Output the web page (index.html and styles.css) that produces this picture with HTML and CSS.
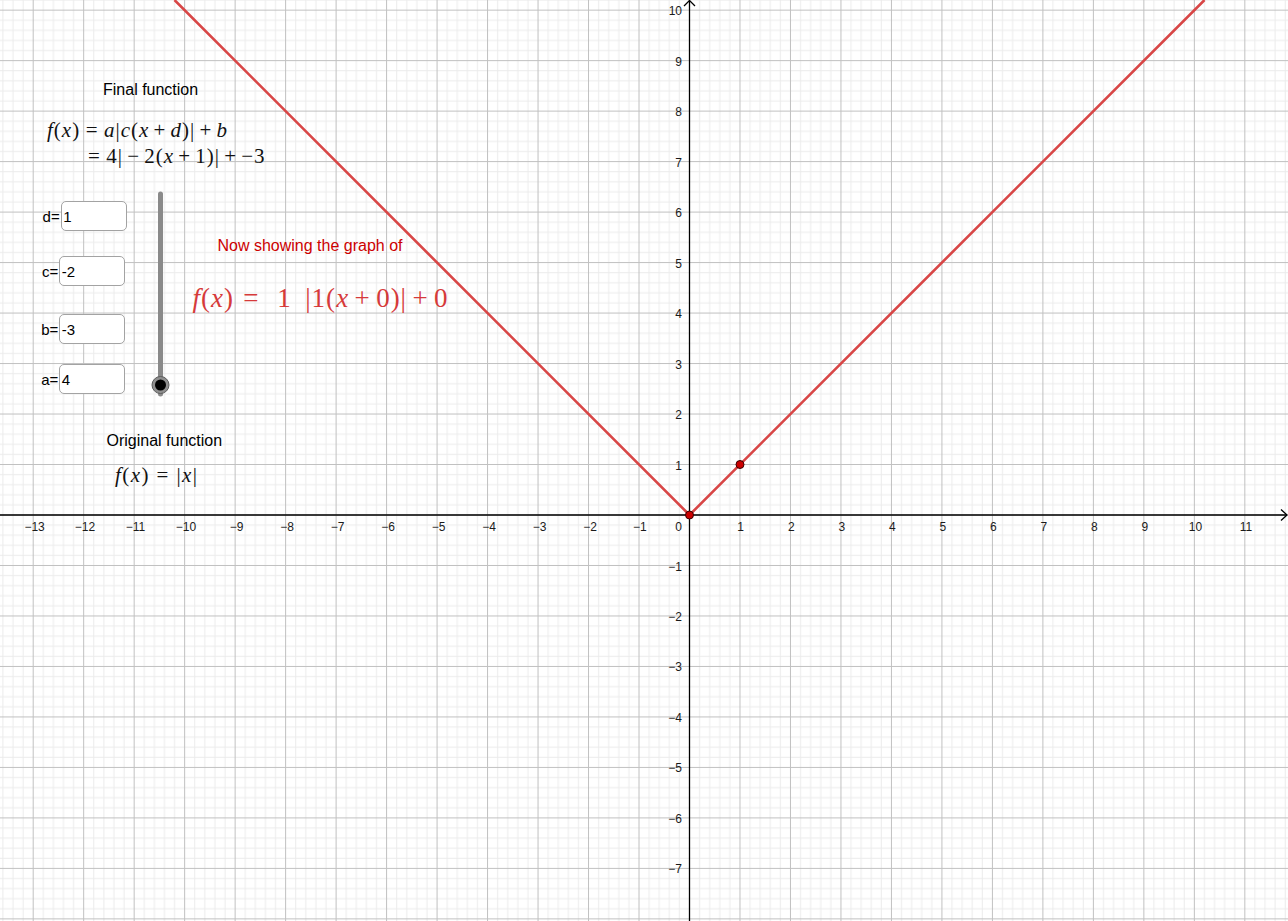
FILE: index.html
```html
<!DOCTYPE html>
<html lang="en">
<head>
<meta charset="utf-8">
<title>Absolute value transformations</title>
<link rel="stylesheet" href="styles.css">
</head>
<body>
<main class="canvas">
  <svg class="plot" width="1288" height="921" viewBox="0 0 1288 921" xmlns="http://www.w3.org/2000/svg">
    <defs>
      <pattern id="grid" patternUnits="userSpaceOnUse" x="689" y="514.5" width="50.485" height="50.485">
        <rect class="minor" x="10.097" y="0" width="1" height="50.485"/>
        <rect class="minor" x="20.194" y="0" width="1" height="50.485"/>
        <rect class="minor" x="30.291" y="0" width="1" height="50.485"/>
        <rect class="minor" x="40.388" y="0" width="1" height="50.485"/>
        <rect class="minor" x="0" y="10.097" width="50.485" height="1"/>
        <rect class="minor" x="0" y="20.194" width="50.485" height="1"/>
        <rect class="minor" x="0" y="30.291" width="50.485" height="1"/>
        <rect class="minor" x="0" y="40.388" width="50.485" height="1"/>
        <rect class="major" x="0" y="0" width="1" height="50.485"/>
        <rect class="major" x="0" y="0" width="50.485" height="1"/>
      </pattern>
    </defs>
    <rect x="0" y="0" width="1288" height="921" fill="#fff"/>
    <rect x="0" y="0" width="1288" height="921" fill="url(#grid)"/>

    <!-- axes -->
    <line class="axis" x1="0" y1="515" x2="1287" y2="515"/>
    <line class="axis" x1="689.5" y1="0.5" x2="689.5" y2="921"/>
    <polyline class="axis" points="1281,509.5 1287,515 1281,520.5"/>
    <polyline class="axis" points="684,6 689.5,0.5 695,6"/>

    <!-- x labels -->
    <g class="lbl-x">
      <text x="34.6" y="531">−13</text>
      <text x="85" y="531">−12</text>
      <text x="135.5" y="531">−11</text>
      <text x="186" y="531">−10</text>
      <text x="236.5" y="531">−9</text>
      <text x="287" y="531">−8</text>
      <text x="337.5" y="531">−7</text>
      <text x="388" y="531">−6</text>
      <text x="438.5" y="531">−5</text>
      <text x="489" y="531">−4</text>
      <text x="539.5" y="531">−3</text>
      <text x="590" y="531">−2</text>
      <text x="639.8" y="531">−1</text>
      <text x="740.5" y="531">1</text>
      <text x="791.3" y="531">2</text>
      <text x="841.8" y="531">3</text>
      <text x="892.3" y="531">4</text>
      <text x="942.8" y="531">5</text>
      <text x="993.3" y="531">6</text>
      <text x="1043.8" y="531">7</text>
      <text x="1094.3" y="531">8</text>
      <text x="1144.8" y="531">9</text>
      <text x="1195.5" y="531">10</text>
      <text x="1246" y="531">11</text>
    </g>
    <!-- y labels -->
    <g class="lbl-y">
      <text x="682" y="531">0</text>
      <text x="682" y="15.2">10</text>
      <text x="682" y="65.7">9</text>
      <text x="682" y="116.2">8</text>
      <text x="682" y="166.6">7</text>
      <text x="682" y="217.1">6</text>
      <text x="682" y="267.6">5</text>
      <text x="682" y="318.1">4</text>
      <text x="682" y="368.6">3</text>
      <text x="682" y="419">2</text>
      <text x="682" y="469.5">1</text>
      <text x="682" y="570.5">−1</text>
      <text x="682" y="621">−2</text>
      <text x="682" y="671.4">−3</text>
      <text x="682" y="721.9">−4</text>
      <text x="682" y="772.4">−5</text>
      <text x="682" y="822.9">−6</text>
      <text x="682" y="873.4">−7</text>
    </g>

    <!-- graph of f -->
    <polyline class="fn" points="174.5,0 689.5,515 1204.5,0"/>
    <circle class="pt" cx="689.5" cy="515" r="4"/>
    <circle class="pt" cx="740" cy="464.5" r="4"/>

    <!-- slider -->
    <line class="slider-track" x1="160.5" y1="194" x2="160.5" y2="394"/>
    <circle class="slider-halo" cx="160.5" cy="385" r="8.5"/>
    <circle class="slider-knob" cx="160.5" cy="385" r="5.5"/>
  </svg>

  <p class="caption cap-final">Final function</p>

  <div class="math formula-final">
    <div class="mline"><i>f</i>(<i>x</i>)<span class="rel">=</span><i>a</i>|<i>c</i>(<i>x</i><span class="bin">+</span><i>d</i>)|<span class="bin">+</span><i>b</i></div>
    <div class="mline second"><span class="rel lead">=</span>4|<span class="bin">−</span>2(<i>x</i><span class="bin">+</span>1)|<span class="bin">+</span>−3</div>
  </div>

  <div class="field field-d"><span class="flabel">d=</span><span class="fbox">1</span></div>
  <div class="field field-c"><span class="flabel">c=</span><span class="fbox">-2</span></div>
  <div class="field field-b"><span class="flabel">b=</span><span class="fbox">-3</span></div>
  <div class="field field-a"><span class="flabel">a=</span><span class="fbox">4</span></div>

  <p class="caption cap-now">Now showing the graph of</p>
  <div class="math formula-now"><i>f</i>(<i>x</i>)<span class="rel">=</span><span class="coef">1</span>|1(<i>x</i><span class="bin">+</span>0)|<span class="bin">+</span>0</div>

  <p class="caption cap-orig">Original function</p>
  <div class="math formula-orig"><i>f</i>(<i>x</i>)<span class="rel">=</span>|<i>x</i>|</div>
</main>
</body>
</html>
```

FILE: styles.css
```css
html, body {
  margin: 0;
  padding: 0;
  background: #fff;
}

body {
  width: 1288px;
  height: 921px;
  overflow: hidden;
  font-family: "Liberation Sans", Arial, sans-serif;
  color: #000;
}

.canvas {
  position: relative;
  width: 1288px;
  height: 921px;
}

.plot {
  position: absolute;
  left: 0;
  top: 0;
  display: block;
}

.minor { fill: #ebebeb; }
.major { fill: #c0c0c0; }

.axis {
  stroke: #000;
  stroke-width: 1.3;
  fill: none;
}

.lbl-x text,
.lbl-y text {
  font-family: "Liberation Sans", Arial, sans-serif;
  font-size: 12px;
  fill: #1a1a1a;
}
.lbl-x text { text-anchor: middle; }
.lbl-y text { text-anchor: end; }

.fn {
  fill: none;
  stroke: #d84646;
  stroke-width: 2.6;
  stroke-linejoin: round;
}

.pt {
  fill: #cc0000;
  stroke: #3a0000;
  stroke-width: 1;
}

.slider-track {
  stroke: #8a8a8a;
  stroke-width: 5;
  stroke-linecap: round;
}
.slider-halo {
  fill: #8f8f8f;
  stroke: #5c5c5c;
  stroke-width: 1;
}
.slider-knob { fill: #000; }

/* captions */
.caption {
  position: absolute;
  margin: 0;
  font-size: 16px;
  line-height: 1;
  white-space: nowrap;
}
.cap-final { left: 103px; top: 81.5px; }
.cap-now   { left: 217.5px; top: 238.2px; color: #cc0000; }
.cap-orig  { left: 106.5px; top: 432.5px; }

/* math */
.math {
  position: absolute;
  font-family: "Liberation Serif", "Times New Roman", serif;
  font-size: 21px;
  line-height: 1;
  letter-spacing: 1px;
  white-space: nowrap;
  color: #111;
}
.math i { font-style: italic; }
.rel { margin: 0 0.26em; }
.bin { margin: 0 0.2em; }
.rel.lead { margin-left: 0; }

.formula-final {
  left: 47px;
  top: 117px;
}
.mline { line-height: 26px; }
.mline.second { padding-left: 41px; }

.formula-orig {
  left: 115px;
  top: 465.4px;
  letter-spacing: 1.4px;
}
.formula-orig .rel { margin: 0 0.32em; }

.formula-now {
  left: 192.5px;
  top: 284.5px;
  font-size: 27px;
  letter-spacing: 1px;
  color: #d63a3a;
}
.formula-now .rel { margin: 0 0.3em 0 0.34em; }
.formula-now .coef { margin: 0 0.5em 0 0.36em; }

/* input fields */
.field {
  position: absolute;
  display: flex;
  align-items: center;
  height: 30px;
  font-size: 15px;
}
.flabel {
  width: 19px;
  padding-right: 1px;
  text-align: right;
  line-height: 1;
}
.fbox {
  box-sizing: border-box;
  width: 66px;
  height: 30px;
  border: 1px solid #a3a3a3;
  border-radius: 5px;
  background: #fff;
  display: flex;
  align-items: center;
  padding-left: 1.5px;
  line-height: 1;
}
.field-d { left: 40.7px; top: 201px; }
.field-c { left: 39.3px; top: 256px; }
.field-b { left: 39.3px; top: 314px; }
.field-a { left: 39.3px; top: 364px; }
```
